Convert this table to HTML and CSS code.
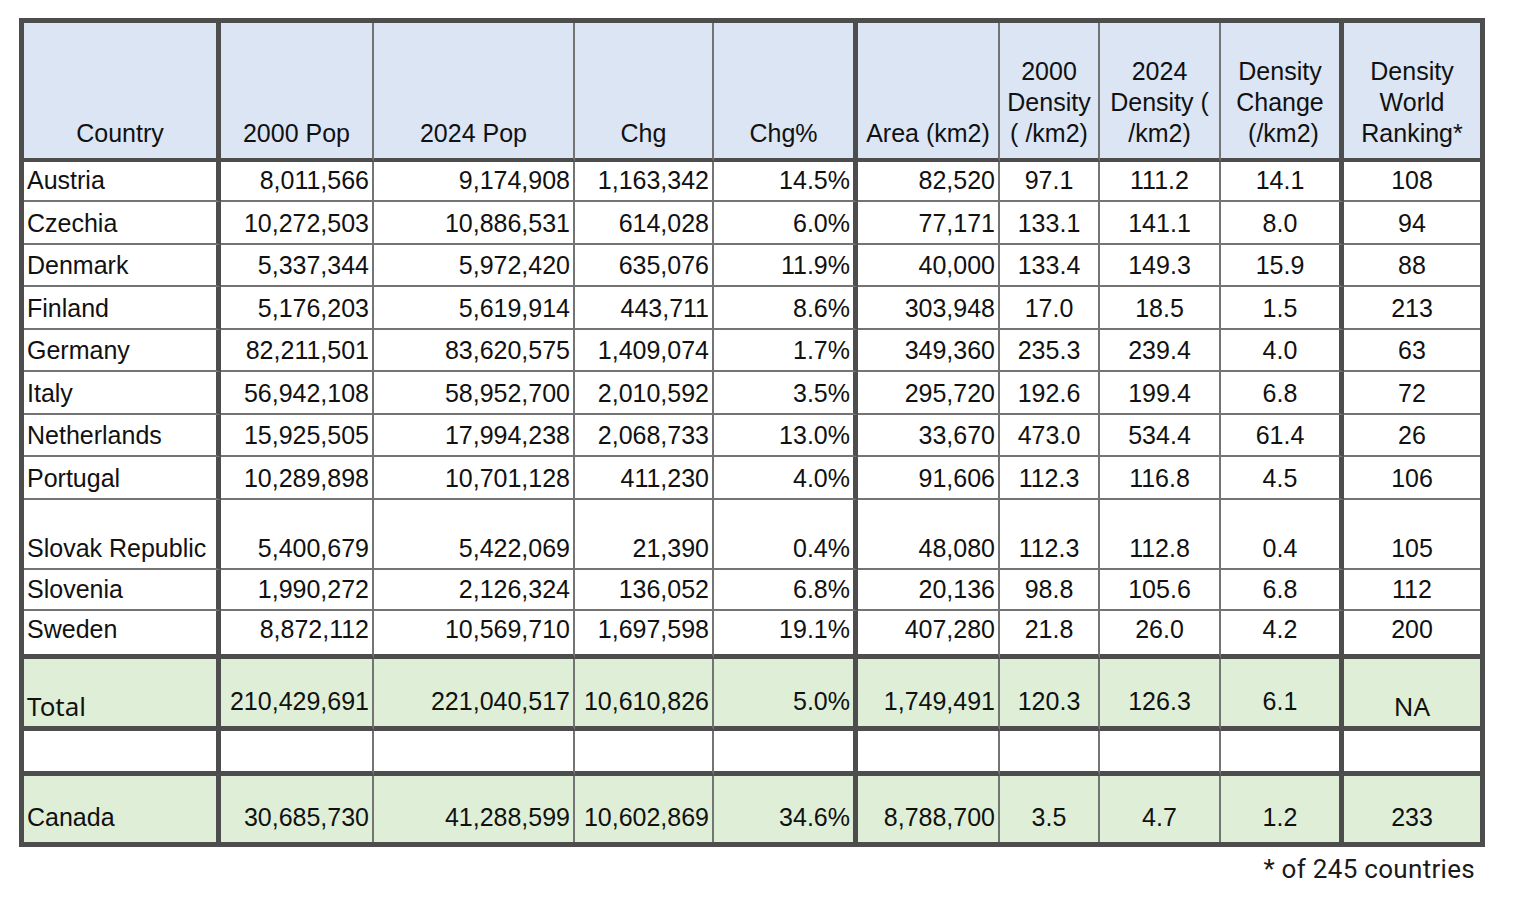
FILE: index.html
```html
<!DOCTYPE html>
<html lang="en">
<head>
<meta charset="utf-8">
<title>Population density comparison</title>
<link rel="stylesheet" href="styles.css">
</head>
<body>
<div class="sheet">
  <table class="grid">
    <colgroup>
      <col class="c-country">
      <col class="c-pop00">
      <col class="c-pop24">
      <col class="c-chg">
      <col class="c-chgp">
      <col class="c-area">
      <col class="c-d00">
      <col class="c-d24">
      <col class="c-dc">
      <col class="c-rank">
    </colgroup>
    <thead>
      <tr class="hdr">
        <th class="sep-thick">Country</th>
        <th>2000 Pop</th>
        <th>2024 Pop</th>
        <th>Chg</th>
        <th class="sep-thick">Chg%</th>
        <th>Area (km2)</th>
        <th>2000<br>Density<br>( /km2)</th>
        <th>2024<br>Density (<br>/km2)</th>
        <th class="sep-thick">Density<br>Change<br>&nbsp;(/km2)</th>
        <th>Density<br>World<br>Ranking*</th>
      </tr>
    </thead>
    <tbody>
      <tr class="data first">
        <td class="name sep-thick">Austria</td><td class="num">8,011,566</td><td class="num">9,174,908</td><td class="num">1,163,342</td><td class="num sep-thick">14.5%</td><td class="num">82,520</td><td class="mid">97.1</td><td class="mid">111.2</td><td class="mid sep-thick">14.1</td><td class="mid">108</td>
      </tr>
      <tr class="data">
        <td class="name sep-thick">Czechia</td><td class="num">10,272,503</td><td class="num">10,886,531</td><td class="num">614,028</td><td class="num sep-thick">6.0%</td><td class="num">77,171</td><td class="mid">133.1</td><td class="mid">141.1</td><td class="mid sep-thick">8.0</td><td class="mid">94</td>
      </tr>
      <tr class="data">
        <td class="name sep-thick">Denmark</td><td class="num">5,337,344</td><td class="num">5,972,420</td><td class="num">635,076</td><td class="num sep-thick">11.9%</td><td class="num">40,000</td><td class="mid">133.4</td><td class="mid">149.3</td><td class="mid sep-thick">15.9</td><td class="mid">88</td>
      </tr>
      <tr class="data">
        <td class="name sep-thick">Finland</td><td class="num">5,176,203</td><td class="num">5,619,914</td><td class="num">443,711</td><td class="num sep-thick">8.6%</td><td class="num">303,948</td><td class="mid">17.0</td><td class="mid">18.5</td><td class="mid sep-thick">1.5</td><td class="mid">213</td>
      </tr>
      <tr class="data">
        <td class="name sep-thick">Germany</td><td class="num">82,211,501</td><td class="num">83,620,575</td><td class="num">1,409,074</td><td class="num sep-thick">1.7%</td><td class="num">349,360</td><td class="mid">235.3</td><td class="mid">239.4</td><td class="mid sep-thick">4.0</td><td class="mid">63</td>
      </tr>
      <tr class="data">
        <td class="name sep-thick">Italy</td><td class="num">56,942,108</td><td class="num">58,952,700</td><td class="num">2,010,592</td><td class="num sep-thick">3.5%</td><td class="num">295,720</td><td class="mid">192.6</td><td class="mid">199.4</td><td class="mid sep-thick">6.8</td><td class="mid">72</td>
      </tr>
      <tr class="data">
        <td class="name sep-thick">Netherlands</td><td class="num">15,925,505</td><td class="num">17,994,238</td><td class="num">2,068,733</td><td class="num sep-thick">13.0%</td><td class="num">33,670</td><td class="mid">473.0</td><td class="mid">534.4</td><td class="mid sep-thick">61.4</td><td class="mid">26</td>
      </tr>
      <tr class="data">
        <td class="name sep-thick">Portugal</td><td class="num">10,289,898</td><td class="num">10,701,128</td><td class="num">411,230</td><td class="num sep-thick">4.0%</td><td class="num">91,606</td><td class="mid">112.3</td><td class="mid">116.8</td><td class="mid sep-thick">4.5</td><td class="mid">106</td>
      </tr>
      <tr class="data tall">
        <td class="name sep-thick">Slovak Republic</td><td class="num">5,400,679</td><td class="num">5,422,069</td><td class="num">21,390</td><td class="num sep-thick">0.4%</td><td class="num">48,080</td><td class="mid">112.3</td><td class="mid">112.8</td><td class="mid sep-thick">0.4</td><td class="mid">105</td>
      </tr>
      <tr class="data slim">
        <td class="name sep-thick">Slovenia</td><td class="num">1,990,272</td><td class="num">2,126,324</td><td class="num">136,052</td><td class="num sep-thick">6.8%</td><td class="num">20,136</td><td class="mid">98.8</td><td class="mid">105.6</td><td class="mid sep-thick">6.8</td><td class="mid">112</td>
      </tr>
      <tr class="data closing">
        <td class="name sep-thick">Sweden</td><td class="num">8,872,112</td><td class="num">10,569,710</td><td class="num">1,697,598</td><td class="num sep-thick">19.1%</td><td class="num">407,280</td><td class="mid">21.8</td><td class="mid">26.0</td><td class="mid sep-thick">4.2</td><td class="mid">200</td>
      </tr>
      <tr class="summary total">
        <td class="name alt sep-thick">Total</td><td class="num">210,429,691</td><td class="num">221,040,517</td><td class="num">10,610,826</td><td class="num sep-thick">5.0%</td><td class="num">1,749,491</td><td class="mid">120.3</td><td class="mid">126.3</td><td class="mid sep-thick">6.1</td><td class="mid alt">NA</td>
      </tr>
      <tr class="spacer">
        <td class="sep-thick"></td><td></td><td></td><td></td><td class="sep-thick"></td><td></td><td></td><td></td><td class="sep-thick"></td><td></td>
      </tr>
      <tr class="summary last">
        <td class="name sep-thick">Canada</td><td class="num">30,685,730</td><td class="num">41,288,599</td><td class="num">10,602,869</td><td class="num sep-thick">34.6%</td><td class="num">8,788,700</td><td class="mid">3.5</td><td class="mid">4.7</td><td class="mid sep-thick">1.2</td><td class="mid">233</td>
      </tr>
    </tbody>
  </table>
  <p class="note">* of 245 countries</p>
</div>
</body>
</html>
```

FILE: styles.css
```css
html, body {
  margin: 0;
  background: #ffffff;
}

body {
  padding: 18px 0 0 19px;
  font-family: "Liberation Sans", Arial, sans-serif;
  color: #111111;
}

.sheet {
  width: 1466px;
}

.grid {
  width: 1466px;
  table-layout: fixed;
  border-collapse: separate;
  border-spacing: 0;
  border: 5px solid #4d4d4d;
  font-size: 25px;
}

.c-country { width: 197px; }
.c-pop00   { width: 153px; }
.c-pop24   { width: 201px; }
.c-chg     { width: 139px; }
.c-chgp    { width: 144px; }
.c-area    { width: 142px; }
.c-d00     { width: 100px; }
.c-d24     { width: 121px; }
.c-dc      { width: 123px; }
.c-rank    { width: 136px; }

.grid th,
.grid td {
  box-sizing: border-box;
  padding: 0 3px 6px;
  vertical-align: bottom;
  white-space: nowrap;
  line-height: 28px;
  border-right: 2px solid #747474;
  border-bottom: 2px solid #747474;
  overflow: hidden;
}

.grid th:last-child,
.grid td:last-child {
  border-right: none;
}

.grid .sep-thick {
  border-right: 5px solid #4d4d4d;
}

/* header */
.hdr {
  height: 139px;
}

.hdr th {
  background: #dbe5f4;
  font-weight: normal;
  text-align: center;
  line-height: 31px;
  padding-bottom: 9px;
  border-bottom: 4px solid #4d4d4d;
}

/* data rows */
.data { height: 42px; }
.data:nth-child(even) { height: 43px; }
.data.first { height: 40px; }
.data.tall { height: 70px; }
.data.slim { height: 41px; }
.data.closing { height: 48px; }

.data.closing td {
  border-bottom: 5px solid #4d4d4d;
  padding-bottom: 11px;
}

.name { text-align: left; }
.num { text-align: right; }
.mid { text-align: center; }

/* summary rows */
.summary td {
  background: #dfefd7;
  padding-bottom: 11px;
}

.total { height: 72px; }
.total td {
  border-bottom: 5px solid #4d4d4d;
}

.spacer { height: 45px; }
.spacer td {
  border-bottom: 5px solid #4d4d4d;
}

.last { height: 66px; }
.last td {
  border-bottom: none;
}

.summary td.alt {
  font-family: "Noto Sans", "Open Sans", sans-serif;
  font-size: 26px;
  padding-bottom: 6px;
}

.note {
  margin: 8px 0 0;
  padding-right: 10px;
  text-align: right;
  font-family: Roboto, "Noto Sans", sans-serif;
  font-size: 26px;
  letter-spacing: 0.3px;
  line-height: 28px;
  color: #1a1a1a;
}
```
